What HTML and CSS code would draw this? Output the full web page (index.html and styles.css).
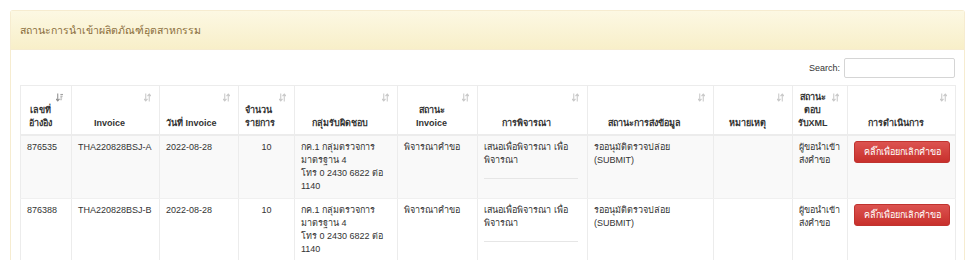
FILE: index.html
```html
<!DOCTYPE html>
<html lang="th">
<head>
<meta charset="utf-8">
<title>สถานะการนำเข้าผลิตภัณฑ์อุตสาหกรรม</title>
<link rel="stylesheet" href="styles.css">
</head>
<body>
<div class="panel">
  <div class="panel-heading">สถานะการนำเข้าผลิตภัณฑ์อุตสาหกรรม</div>
  <div class="panel-body">
    <div class="search-row">
      <label class="search-label">Search:</label>
      <input class="search-input" type="text">
    </div>
    <table class="grid">
      <colgroup>
        <col style="width:51px"><col style="width:88px"><col style="width:79px"><col style="width:56px">
        <col style="width:103px"><col style="width:80px"><col style="width:110px"><col style="width:126px">
        <col style="width:79px"><col style="width:55px"><col style="width:108px">
      </colgroup>
      <thead>
        <tr>
          <th class="sorted">เลขที่<br>อ้างอิง<svg class="sort-icon" viewBox="0 0 8 9"><path d="M2 0v8M0 6l2 2.5L4 6" stroke="#8e8e8e" stroke-width="1.2" fill="none"/><path d="M5 1h3M5 3h2.5M5 5h2M5 7h1.5" stroke="#8e8e8e" stroke-width="1"/></svg></th>
          <th>Invoice<svg class="sort-icon" viewBox="0 0 8 9"><path d="M2 0v8.5M0 6l2 2.5L4 6M6 0.5v8.5M4 3l2-2.5L8 3" stroke="#c8c8c8" stroke-width="1.2" fill="none"/></svg></th>
          <th class="left">วันที่ Invoice<svg class="sort-icon" viewBox="0 0 8 9"><path d="M2 0v8.5M0 6l2 2.5L4 6M6 0.5v8.5M4 3l2-2.5L8 3" stroke="#c8c8c8" stroke-width="1.2" fill="none"/></svg></th>
          <th class="left">จำนวน<br>รายการ<svg class="sort-icon" viewBox="0 0 8 9"><path d="M2 0v8.5M0 6l2 2.5L4 6M6 0.5v8.5M4 3l2-2.5L8 3" stroke="#c8c8c8" stroke-width="1.2" fill="none"/></svg></th>
          <th>กลุ่มรับผิดชอบ<svg class="sort-icon" viewBox="0 0 8 9"><path d="M2 0v8.5M0 6l2 2.5L4 6M6 0.5v8.5M4 3l2-2.5L8 3" stroke="#c8c8c8" stroke-width="1.2" fill="none"/></svg></th>
          <th>สถานะ<br>Invoice<svg class="sort-icon" viewBox="0 0 8 9"><path d="M2 0v8.5M0 6l2 2.5L4 6M6 0.5v8.5M4 3l2-2.5L8 3" stroke="#c8c8c8" stroke-width="1.2" fill="none"/></svg></th>
          <th>การพิจารณา<svg class="sort-icon" viewBox="0 0 8 9"><path d="M2 0v8.5M0 6l2 2.5L4 6M6 0.5v8.5M4 3l2-2.5L8 3" stroke="#c8c8c8" stroke-width="1.2" fill="none"/></svg></th>
          <th>สถานะการส่งข้อมูล<svg class="sort-icon" viewBox="0 0 8 9"><path d="M2 0v8.5M0 6l2 2.5L4 6M6 0.5v8.5M4 3l2-2.5L8 3" stroke="#c8c8c8" stroke-width="1.2" fill="none"/></svg></th>
          <th>หมายเหตุ<svg class="sort-icon" viewBox="0 0 8 9"><path d="M2 0v8.5M0 6l2 2.5L4 6M6 0.5v8.5M4 3l2-2.5L8 3" stroke="#c8c8c8" stroke-width="1.2" fill="none"/></svg></th>
          <th class="narrow">สถานะ<br>ตอบ<br>รับXML<svg class="sort-icon" viewBox="0 0 8 9"><path d="M2 0v8.5M0 6l2 2.5L4 6M6 0.5v8.5M4 3l2-2.5L8 3" stroke="#c8c8c8" stroke-width="1.2" fill="none"/></svg></th>
          <th>การดำเนินการ<svg class="sort-icon" viewBox="0 0 8 9"><path d="M2 0v8.5M0 6l2 2.5L4 6M6 0.5v8.5M4 3l2-2.5L8 3" stroke="#c8c8c8" stroke-width="1.2" fill="none"/></svg></th>
        </tr>
      </thead>
      <tbody>
        <tr class="odd">
          <td>876535</td>
          <td>THA220828BSJ-A</td>
          <td>2022-08-28</td>
          <td class="center">10</td>
          <td>กค.1 กลุ่มตรวจการมาตรฐาน 4<br>โทร 0 2430 6822 ต่อ 1140</td>
          <td>พิจารณาคำขอ</td>
          <td><div class="consider">เสนอเพื่อพิจารณา เพื่อพิจารณา</div></td>
          <td>รออนุมัติตรวจปล่อย (SUBMIT)</td>
          <td></td>
          <td>ผู้ขอนำเข้าส่งคำขอ</td>
          <td><button class="btn-cancel" type="button">คลิ๊กเพื่อยกเลิกคำขอ</button></td>
        </tr>
        <tr>
          <td>876388</td>
          <td>THA220828BSJ-B</td>
          <td>2022-08-28</td>
          <td class="center">10</td>
          <td>กค.1 กลุ่มตรวจการมาตรฐาน 4<br>โทร 0 2430 6822 ต่อ 1140</td>
          <td>พิจารณาคำขอ</td>
          <td><div class="consider">เสนอเพื่อพิจารณา เพื่อพิจารณา</div></td>
          <td>รออนุมัติตรวจปล่อย (SUBMIT)</td>
          <td></td>
          <td>ผู้ขอนำเข้าส่งคำขอ</td>
          <td><button class="btn-cancel" type="button">คลิ๊กเพื่อยกเลิกคำขอ</button></td>
        </tr>
      </tbody>
    </table>
  </div>
</div>
</body>
</html>
```

FILE: styles.css
```css
html, body {
  margin: 0;
  padding: 0;
  background: #ffffff;
}
body {
  padding: 10px 10px 0 10px;
  font-family: "Liberation Sans", Arial, sans-serif;
  font-size: 9px;
  line-height: 13px;
  color: #333333;
}
.panel {
  border: 1px solid #f6ecd0;
  border-bottom: none;
  border-radius: 3px 3px 0 0;
}
.panel-heading {
  background: linear-gradient(to bottom, #fcf8e3 0%, #f8efc9 100%);
  color: #8a6d3b;
  font-size: 10.5px;
  line-height: 18px;
  padding: 10px 9px 10px 9px;
  border-bottom: 1px solid #f6ecd0;
}
.panel-body {
  padding: 8px 9px 0 9px;
}
.search-row {
  display: flex;
  justify-content: flex-end;
  align-items: center;
  gap: 4px;
  margin-bottom: 7px;
}
.search-label {
  font-size: 9px;
}
.search-input {
  box-sizing: border-box;
  width: 111px;
  height: 20px;
  border: 1px solid #d5d5d5;
  border-radius: 2px;
  margin: 0;
}
.grid {
  table-layout: fixed;
  width: 935px;
  border-collapse: collapse;
  border: 1px solid #ececec;
}
.grid th, .grid td {
  border-right: 1px solid #ececec;
  word-wrap: break-word;
}
.grid th {
  position: relative;
  font-weight: bold;
  text-align: center;
  vertical-align: bottom;
  white-space: nowrap;
  padding: 5px 18px 4px 6px;
  border-bottom: 2px solid #ececec;
}
.grid th.left {
  text-align: left;
}
.grid th.narrow {
  padding-left: 3px;
}
.sort-icon {
  position: absolute;
  top: 7px;
  right: 8px;
  width: 7px;
  height: 9px;
}
.grid td {
  vertical-align: top;
  text-align: left;
  padding: 5px 6px 5px 6px;
  height: 51px;
  border-bottom: 1px solid #f0f0f0;
}
.grid tr.odd td {
  background: #f9f9f9;
}
.grid td.center {
  text-align: center;
}
.consider {
  padding-bottom: 11px;
  border-bottom: 1px solid #e6e6e6;
  margin-right: 3px;
}
.btn-cancel {
  display: block;
  width: 96px;
  height: 22px;
  margin-top: 0;
  padding: 0;
  border: 1px solid #c0332f;
  border-radius: 3px;
  background: linear-gradient(to bottom, #dc5350 0%, #c8302c 100%);
  color: #ffffff;
  font-family: inherit;
  font-size: 9px;
  line-height: 20px;
  text-align: center;
}
```
